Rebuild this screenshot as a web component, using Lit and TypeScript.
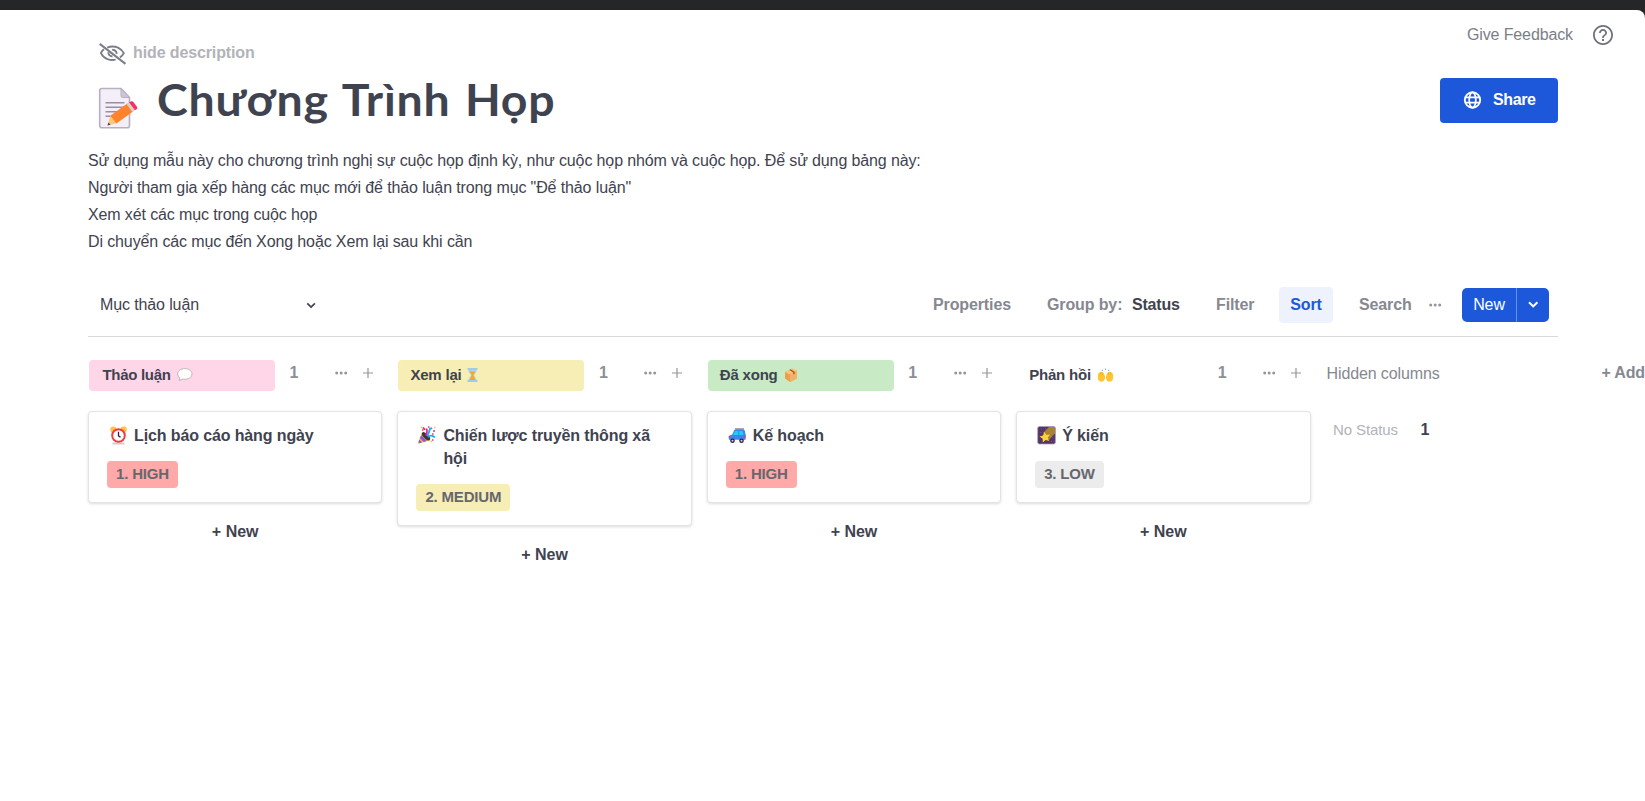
import { LitElement, html, svg, css } from "lit";
import { customElement, property } from "lit/decorators.js";

const icons: Record<string, any> = {
  note: svg`<path d="M3 1.500h19l8.500 9v28q0 2.300-2.300 2.300H3q-2.300 0-2.300-2.300v-35q0-2 2.300-2z" fill="#f3eef8" stroke="#b8afc3" stroke-width="1.600"/><path d="M22 1.500v7.200q0 1.800 1.800 1.800h6.700z" fill="#cdc4d6" stroke="#b8afc3"/><path d="M6.500 15.800h19M6.500 20.300h19M6.500 24.700h14M6.500 29.200h8" stroke="#998ea4" stroke-width="1.400"/><path d="m8.500 38.500 2.900-9.800 6 7.600z" fill="#fcc878"/><path d="m8.500 38.500 1-3 2 2.300z" fill="#533566"/><path d="m11.400 28.700 17.200-12.500 5.800 8-17 12.300z" fill="#ff822d"/><path d="m27.600 17 2.500-1.900 5.900 8-2.600 1.900z" fill="#d3d3d3"/><path d="m30 15.200 2.500-.9q1.300-.2 2.100.9l3.300 4.500q1 1.500-.3 2.600l-1.700.9z" fill="#f8315f"/>`,
  bubble: svg`<path d="M7.800 1.600C4 1.600.7 3.700.7 6.900q0 2.500 2 4L2.300 13.500l3.600-1.400q.9.200 1.900.2c3.900 0 7.200-2.200 7.200-5.400S11.700 1.600 7.800 1.600z" fill="#fff" stroke="#bfb7b9"/>`,
  hourglass: svg`<path d="M1.500 2h8v2.400L7 8.200l2.500 4.200V14h-8v-1.600L4 8.200 1.500 4.400z" fill="#a9d3f0"/><path d="M2.500 4.500h6L6.200 8l2.600 5.500H2.200L4.800 8z" fill="#ffa51f"/><path d="M.5 1h10v2H.5zM.5 13h10v2H.5z" fill="#9dcbe8"/>`,
  box: svg`<path d="m1 5 7.500-3.600L13 3.800v7.700L6 15 1 11.500z" fill="#eca04f"/><path d="m1 5 7.500-3.600L13 3.800 6 7.500z" fill="#fdc778"/><path d="M6 7.500V15l7-3.500V3.800z" fill="#f4b267"/><path d="m5.200 3 1.500-.7 4 2.500v1.900l-1.500.7V5.500z" fill="#a45c35"/>`,
  hands: svg`<path d="M5.800 4 4.800 2.800M8.500 3V1.500M11.200 4l1-1.200" stroke="#75b8ed" stroke-width="1.100"/><path d="M.8 9.500Q.9 5.200 4 4.800q2.600-.2 3.300 2.400l.8 3q-.1 4.400-4 4.500Q.9 14.600.8 9.500zM16.200 9.500q-.1-4.300-3.200-4.700-2.600-.2-3.300 2.400l-.8 3q.1 4.400 4 4.500 3.200-.1 3.300-5.200z" fill="#ffc52e"/><path d="m3.200 5.500.2 2.500m1.900-2.500.2 2.500M13.800 5.500l-.2 2.500m-1.900-2.500-.2 2.500" stroke="#e5a31c" stroke-width=".5"/>`,
  alarm: svg`<path d="M2.500 16.500h12v2h-12z" fill="#cfcdd0"/><circle cx="3.400" cy="3.500" r="3.100" fill="#ffc343"/><circle cx="13.700" cy="3.500" r="3.100" fill="#ffc343"/><circle cx="8.500" cy="9.500" r="6.300" fill="#fff" stroke="#f33b3e" stroke-width="2"/><path d="M8.500 5.800v4l2 1.400" fill="none" stroke="#321b41" stroke-width="1.300"/>`,
  party: svg`<path d="M4.200 6.500 12 14.200.7 17.600q-.8 0-.6-.9z" fill="#fbb034"/><path d="m3.200 9.200 5.600 5.900-3 .9-4-4.100zM1.300 13.500 3.900 16.500l-2.300.7-1.100-1.100z" fill="#8a5bd4"/><ellipse cx="8" cy="10.300" rx="2.400" ry="5.300" transform="rotate(-45 8 10.300)" fill="#44323f"/><path d="M7.500 9.500Q10 6.500 8.500 2.500M5 1.500l2 2.300" fill="none" stroke="#ec168c" stroke-width="1.700"/><path d="M9 10q2-2.500 3-7.200l2.200-.6M10 11q3-3 7 .4" fill="none" stroke="#22a7f0" stroke-width="1.800"/><path d="M4 4h1.500M10 1h1.500M15 5h2M14 8h1.500M14 14h1.500" stroke="#f4355b" stroke-width="1.500"/><path d="M2.800 1.500h1.400M16 1.500h1.400M12.500 15.500h1.500" stroke="#ffbd35" stroke-width="1.300"/>`,
  car: svg`<path d="M6 4.600q.5-1.300 2-1.300h7q1.500 0 1.800 1.500l.8 4v5H1q-.8-3.600.4-4.400l2.900-1z" fill="#3f83ee"/><path d="M7 5h3.300v4H5.200zM11.200 5h3.500l.7 4h-4.200z" fill="#1dd0f4"/><path d="M7 2.800h9" stroke="#8b7d87"/><path d="M.8 10.700h1.500M17 9v3" stroke="#f8315f" stroke-width="1.300"/><circle cx="4.500" cy="14.800" r="2.300" fill="#321b41"/><circle cx="13.500" cy="14.800" r="2.300" fill="#321b41"/><circle cx="4.500" cy="14.800" r="1" fill="#d6d2d9"/><circle cx="13.500" cy="14.800" r="1" fill="#d6d2d9"/>`,
  star: svg`<rect x="-.3" y=".5" width="17.700" height="17.500" rx="1.800" fill="#533566" stroke="#a99ab4" stroke-width=".7"/><path d="M5 7 11 1H17v6.300L11 14z" fill="#a78432"/><path d="m6.400 5.900 2 3 3.700-.3-2.300 3 1.400 3.500-3.600-1.100-2.900 2.500v-3.800L1.500 10.600l3.600-1z" fill="#ffd13b"/><path d="M3 3h.8M7 2.500h.8M2.500 6.500h.8M14.500 12h.8M13 15.500h.8M15.500 15h.8" stroke="#8d65c5" stroke-width=".8"/>`,
  eyeOff: svg`<g fill="none" stroke="#7b7e8a" stroke-width="1.900"><path d="M8.200 4.700Q13.500 2.300 19 4.700q4 2 5.800 5.400-1.300 2.600-3.800 4.300M5 6.300Q3 7.800 1.900 10.100q2.300 4.400 6.600 6 4 1.500 8.100.5M9.300 9.300q0 3.600 4.200 4.200M13.200 6.800q4 .1 4.500 4"/><path d="m.7.900 25.800 20" stroke-width="2"/></g>`,
  help: svg`<g transform="translate(-2 -2)" fill="#6f727c"><path d="M11 18h2v-2h-2v2zm1-16C6.480 2 2 6.480 2 12s4.480 10 10 10 10-4.480 10-10S17.520 2 12 2zm0 18.200c-4.500 0-8.200-3.700-8.200-8.200s3.700-8.200 8.200-8.200 8.200 3.700 8.200 8.200-3.700 8.200-8.200 8.200zm0-14.200c-2.210 0-4 1.790-4 4h1.800c0-1.100 1-2.200 2.200-2.200s2.200 1 2.200 2.200c0 2-3.100 1.750-3.100 5h1.800c0-2.250 3.100-2.500 3.100-5 0-2.210-1.790-4-4-4z"/></g>`,
  globe: svg`<g fill="none" stroke="#fff" stroke-width="1.900"><circle cx="8.500" cy="9" r="7.700"/><ellipse cx="8.500" cy="9" rx="3.300" ry="7.700" stroke-width="1.700"/><path d="M1.200 6.400h14.600M1.200 11.600h14.600" stroke-width="1.700"/></g>`,
  chevron: svg`<path d="m1.300 1.300 3.800 3.800 3.800-3.800" fill="none" stroke="currentColor" stroke-width="1.700"/>`,
  chevronBold: svg`<path d="m1 1.200 4.200 4.200 4.200-4.200" fill="none" stroke="currentColor" stroke-width="2"/>`,
  dots: svg`<g fill="currentColor"><circle cx="1.700" cy="2" r="1.500"/><circle cx="6.200" cy="2" r="1.500"/><circle cx="10.700" cy="2" r="1.500"/></g>`,
  plus: svg`<path d="M5 0v10M0 5h10" stroke="currentColor" stroke-width="1.200"/>`,
};

const icon = (name: string, w: number, h: number) =>
  html`<svg class="icon" width=${w} height=${h} viewBox="0 0 ${w} ${h}">${icons[name]}</svg>`;

interface Column {
  label: string; mark: string; markWidth: number; tone: string;
  title: string; emoji: string; level: string; levelTone: string;
}

const columns: Column[] = [
  { label: "Thảo luận", mark: "bubble", markWidth: 17, tone: "pink", title: "Lịch báo cáo hàng ngày", emoji: "alarm", level: "1. HIGH", levelTone: "red" },
  { label: "Xem lại", mark: "hourglass", markWidth: 11, tone: "yellow", title: "Chiến lược truyền thông xã hội", emoji: "party", level: "2. MEDIUM", levelTone: "yellow" },
  { label: "Đã xong", mark: "box", markWidth: 15, tone: "green", title: "Kế hoạch", emoji: "car", level: "1. HIGH", levelTone: "red" },
  { label: "Phản hồi", mark: "hands", markWidth: 17, tone: "plain", title: "Ý kiến", emoji: "star", level: "3. LOW", levelTone: "gray" },
];

const reset = css`
  * { box-sizing: border-box; }
  .icon { display: block; flex: none; overflow: visible; }
`;

@customElement("board-column")
export class BoardColumn extends LitElement {
  @property({ attribute: false }) column!: Column;

  static styles = [reset, css`
    :host { display: block; width: 294.4px; flex: none; }
    .head { display: flex; height: 31px; padding-left: 1px; }
    .label { width: 186px; height: 31px; border-radius: 4px; padding: 0 0 2px 13.5px; display: flex; align-items: center; font-weight: 700; font-size: 15px; line-height: 29px; white-space: pre; letter-spacing: -.3px; }
    .label.yellow, .label.green, .label.plain { padding-left: 12px; letter-spacing: -.2px; }
    .mark { margin: 1px 0 0 6.5px; }
    .yellow .mark { margin-left: 5px; }
    .pink { background: #ffd5e8; }
    .yellow { background: #f6eeb4; }
    .green { background: #c8eac4; }
    .red { background: #ffa9a9; }
    .gray { background: #ececec; }
    .count { width: 60px; padding-left: 14.5px; font-weight: 700; line-height: 25px; color: #8d8f96; }
    .actions { display: flex; align-items: center; height: 25px; gap: 16px; color: #94969e; }
    .card { margin-top: 20px; border: 1px solid #e3e4e8; border-radius: 4px; box-shadow: 0 1px 3px rgba(0,0,0,.14); padding: 12px 18px 14px; background: #fff; }
    .title { display: flex; font-weight: 700; line-height: 23px; }
    .emoji { width: 27px; padding: 2px 0 0 3px; }
    .party, .car { padding-left: 2px; }
    .name { flex: 1; }
    .level { display: inline-flex; margin-top: 14px; height: 27px; border-radius: 4px; padding: 0 9px; font-weight: 700; font-size: 15px; line-height: 26px; letter-spacing: -.18px; vertical-align: top; color: #66676e; }
    .add { text-align: center; font-weight: 700; margin-top: 16px; line-height: 25px; letter-spacing: 0; }
  `];

  render() {
    const c = this.column;
    return html`
      <div class="head">
        <div class="label ${c.tone}">${c.label}<span class="mark">${icon(c.mark, c.markWidth, 16)}</span></div>
        <div class="count">1</div>
        <div class="actions">${icon("dots", 12, 4)}${icon("plus", 10, 10)}</div>
      </div>
      <div class="card">
        <div class="title"><div class="emoji ${c.emoji}">${icon(c.emoji, 18, 19)}</div><div class="name">${c.title}</div></div>
        <div class="level ${c.levelTone}">${c.level}</div>
      </div>
      <div class="add">+ New</div>`;
  }
}

@customElement("app-root")
export class AppRoot extends LitElement {
  static styles = [reset, css`
    :host { display: block; width: 100%; height: 801px; overflow: hidden; background: #242628; padding-top: 10px; font: 16px "Liberation Sans", Arial, sans-serif; letter-spacing: -.12px; color: #3f4350; }
    .page { height: 791px; background: #fff; border-top-right-radius: 8px; padding-left: 88px; overflow: hidden; }
    .top { display: flex; height: 68px; justify-content: space-between; }
    .hide { display: flex; align-items: flex-start; padding: 33px 0 0 11px; font-weight: 700; color: #b2b3b9; line-height: 20px; gap: 7px; }
    .feedback { display: flex; align-items: flex-start; padding: 15px 32.5px 0 0; color: #7b7e87; line-height: 20px; gap: 19.5px; }
    .hero { display: flex; height: 62px; width: 1470px; }
    .note { padding: 9px 0 0 11px; width: 69px; }
    .heading { flex: 1; margin: -3px 0 0; font: 700 43.500px/48px Lato, sans-serif; white-space: nowrap; letter-spacing: .8px; word-spacing: 2px; transform: scaleX(1.067); transform-origin: 0 0; }
    .share { width: 118px; height: 45px; border-radius: 4px; background: #1c58d9; color: #fff; font-weight: 700; display: flex; align-items: center; padding-left: 24px; gap: 11px; line-height: 18px; padding-bottom: 1px; letter-spacing: -.4px; }
    .about { height: 140px; padding-top: 7px; line-height: 27px; }
    .tools { display: flex; align-items: center; width: 1470px; height: 57px; border-bottom: 1px solid #d9d9dc; padding-bottom: 6px; font-weight: 700; color: #868891; white-space: nowrap; }
    .view { width: 207px; padding-left: 12px; font-weight: 400; color: #3f4350; }
    .arrow { flex: none; color: #3f4350; width: 638px; padding-left: 11px; }
    .props { width: 114px; }
    .group { width: 85px; }
    .status { width: 84px; color: #3f4350; letter-spacing: -.2px; }
    .filter { width: 63px; }
    .sort { width: 54px; height: 36px; line-height: 36px; border-radius: 4px; background: #edf2fd; color: #1c58d9; text-align: center; margin-right: 26px; }
    .search { width: 70px; }
    .more { width: 33px; color: #94969e; }
    .new { display: flex; width: 87px; height: 34px; border-radius: 5px; background: #1c58d9; color: #fff; font-weight: 400; line-height: 33px; overflow: hidden; }
    .newText { width: 54px; text-align: center; }
    .newMenu { width: 33px; border-left: 1px solid #6890e7; display: flex; align-items: center; justify-content: center; padding-bottom: 2px; }
    .board { display: flex; padding-top: 23px; gap: 15px; width: 1700px; }
    .hidden { width: 261px; padding-left: 1px; color: #868891; line-height: 28px; }
    .hiddenRow { display: flex; margin-top: 29px; padding-left: 6.5px; }
    .none { width: 87.500px; font-size: 15px; color: #b2b3b9; line-height: 25px; }
    .one { font-weight: 700; color: #3f4350; line-height: 26px; }
    .addGroup { font-weight: 700; color: #868891; line-height: 25px; white-space: nowrap; letter-spacing: -.2px; }
  `];

  render() {
    return html`
      <div class="page">
        <div class="top">
          <div class="hide">${icon("eyeOff", 27, 22)}<span>hide description</span></div>
          <div class="feedback"><span>Give Feedback</span>${icon("help", 20, 20)}</div>
        </div>
        <div class="hero">
          <div class="note">${icon("note", 39, 42)}</div>
          <h1 class="heading">Chương Trình Họp</h1>
          <div class="share">${icon("globe", 18, 18)}<span>Share</span></div>
        </div>
        <div class="about">
          <div>Sử dụng mẫu này cho chương trình nghị sự cuộc họp định kỳ, như cuộc họp nhóm và cuộc họp. Để sử dụng bảng này:</div>
          <div>Người tham gia xếp hàng các mục mới để thảo luận trong mục "Để thảo luận"</div>
          <div>Xem xét các mục trong cuộc họp</div>
          <div>Di chuyển các mục đến Xong hoặc Xem lại sau khi cần</div>
        </div>
        <div class="tools">
          <div class="view">Mục thảo luận</div>
          <div class="arrow">${icon("chevron", 10, 7)}</div>
          <div class="props">Properties</div>
          <div class="group">Group by:</div>
          <div class="status">Status</div>
          <div class="filter">Filter</div>
          <div class="sort">Sort</div>
          <div class="search">Search</div>
          <div class="more">${icon("dots", 12, 4)}</div>
          <div class="new"><div class="newText">New</div><div class="newMenu">${icon("chevronBold", 10, 7)}</div></div>
        </div>
        <div class="board">
          ${columns.map((c) => html`<board-column .column=${c}></board-column>`)}
          <div class="hidden">
            <div>Hidden columns</div>
            <div class="hiddenRow"><div class="none">No Status</div><div class="one">1</div></div>
          </div>
          <div class="addGroup">+ Add</div>
        </div>
      </div>`;
  }
}
